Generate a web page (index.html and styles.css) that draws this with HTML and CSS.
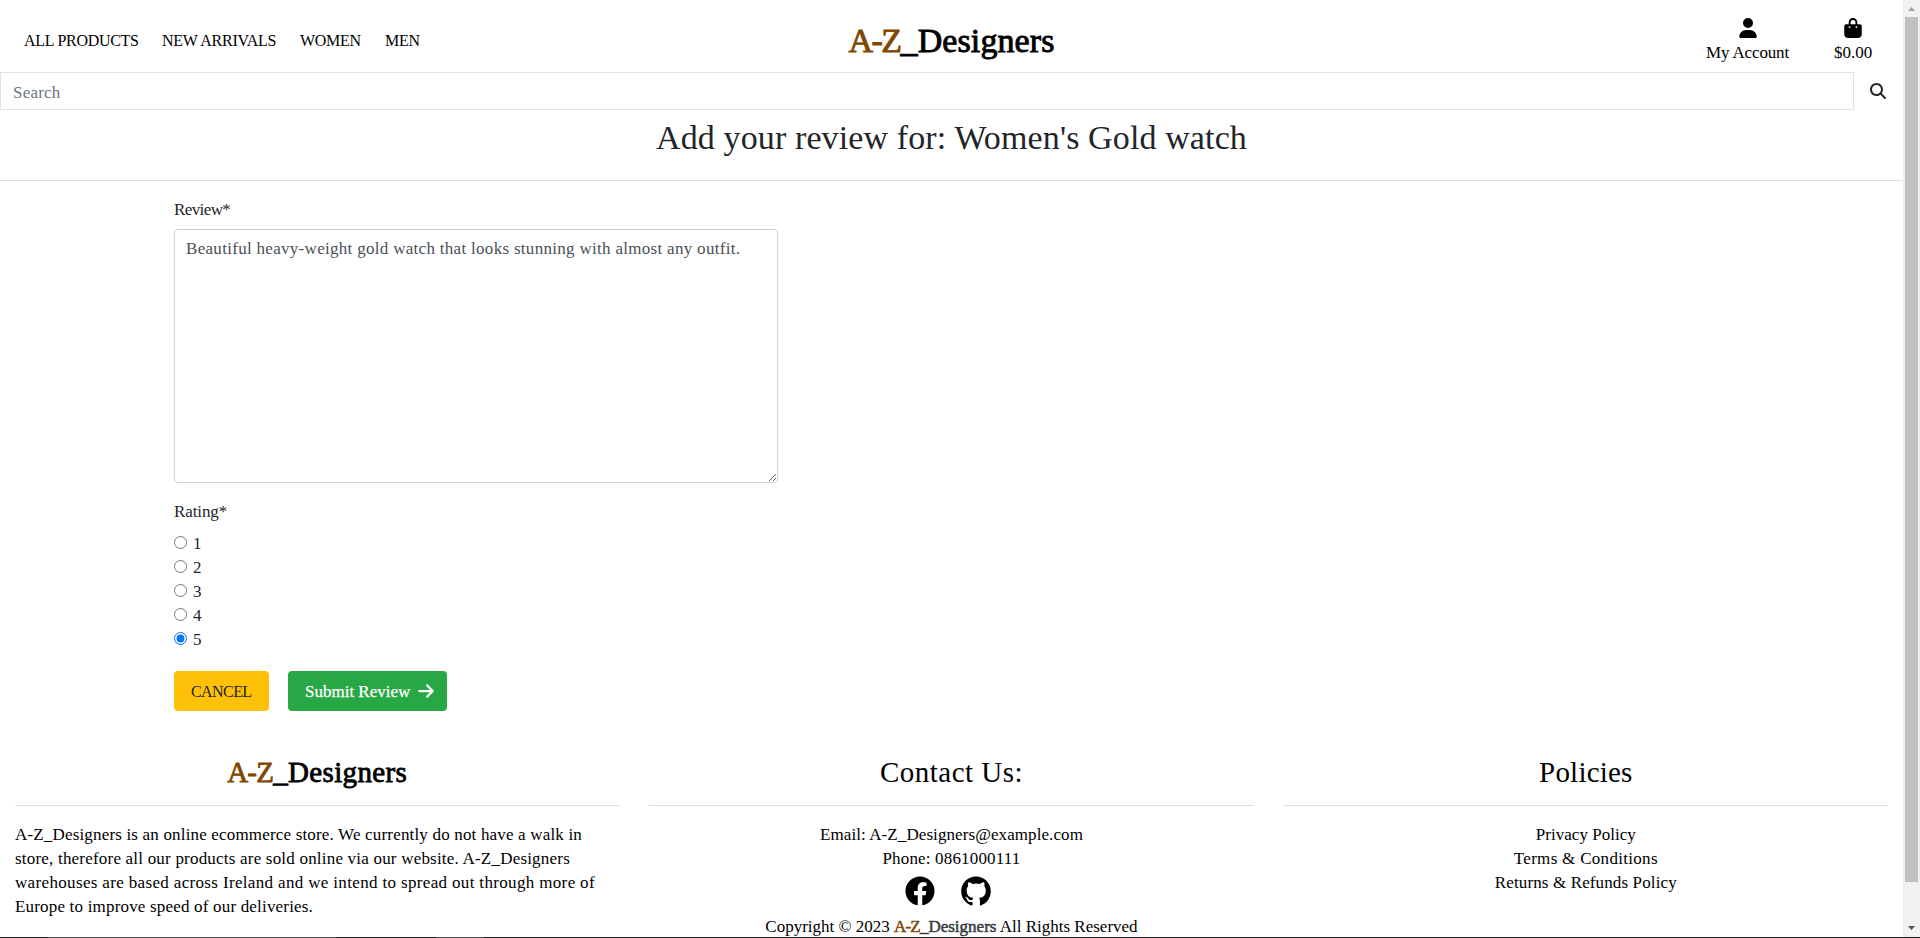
FILE: index.html
```html
<!DOCTYPE html>
<html lang="en">
<head>
<meta charset="utf-8">
<title>A-Z_Designers</title>
<link rel="stylesheet" href="styles.css">
</head>
<body>
<div class="window">
<div class="page">
  <header class="header">
    <nav class="nav">
      <a class="nav-products">ALL PRODUCTS</a>
      <a class="nav-arrivals">NEW ARRIVALS</a>
      <a class="nav-women">WOMEN</a>
      <a class="nav-men">MEN</a>
    </nav>
    <div class="brand"><span class="accent">A-Z</span><span class="rest">_Designers</span></div>
    <div class="tools">
      <a class="tool account">
        <svg width="18" height="20" viewBox="0 0 448 512"><path d="M224 256A128 128 0 1 0 224 0a128 128 0 1 0 0 256zm-45.700 48C79.800 304 0 383.800 0 482.300C0 498.700 13.300 512 29.700 512H418.300c16.400 0 29.700-13.300 29.700-29.700C448 383.800 368.200 304 269.700 304H178.300z"/></svg>
        <span class="account-label">My Account</span>
      </a>
      <a class="tool bag">
        <svg width="18" height="20" viewBox="0 0 448 512"><path d="M160 112c0-35.300 28.700-64 64-64s64 28.700 64 64v48H160V112zm-48 48H48c-26.500 0-48 21.500-48 48V416c0 53 43 96 96 96H352c53 0 96-43 96-96V208c0-26.500-21.500-48-48-48H336V112C336 50.100 285.900 0 224 0S112 50.100 112 112v48zm24 48a24 24 0 1 1 0 48 24 24 0 1 1 0-48zm152 24a24 24 0 1 1 48 0 24 24 0 1 1-48 0z"/></svg>
        <span class="bag-label">$0.00</span>
      </a>
    </div>
  </header>

  <form class="search">
    <input class="search-field" type="text" placeholder="Search">
    <span class="search-button"><svg width="16" height="16" viewBox="0 0 512 512"><path d="M416 208c0 45.900-14.900 88.300-40 122.700L502.600 457.400c12.500 12.500 12.500 32.800 0 45.300s-32.800 12.500-45.300 0L330.700 376c-34.400 25.200-76.800 40-122.700 40C93.100 416 0 322.900 0 208S93.100 0 208 0S416 93.100 416 208zM208 352a144 144 0 1 0 0-288 144 144 0 1 0 0 288z"/></svg></span>
  </form>

  <h2 class="title">Add your review for: Women's Gold watch</h2>

  <main class="review">
    <label class="label review-label">Review*</label>
    <div class="field-edge"></div>
    <textarea class="review-text">Beautiful heavy-weight gold watch that looks stunning with almost any outfit.</textarea>
    <div class="label rating-label">Rating*</div>
    <div class="ratings">
      <label class="rating"><input type="radio" name="rating">1</label>
      <label class="rating"><input type="radio" name="rating">2</label>
      <label class="rating"><input type="radio" name="rating">3</label>
      <label class="rating"><input type="radio" name="rating">4</label>
      <label class="rating"><input type="radio" name="rating" checked>5</label>
    </div>
    <div class="actions">
      <a class="button cancel">CANCEL</a>
      <a class="button submit">Submit Review<svg width="16" height="18" viewBox="0 0 448 512"><path d="M438.600 278.600c12.500-12.500 12.500-32.800 0-45.300l-160-160c-12.500-12.500-32.800-12.500-45.300 0s-12.500 32.800 0 45.300L338.800 224 32 224c-17.700 0-32 14.300-32 32s14.300 32 32 32l306.700 0L233.400 393.400c-12.500 12.500-12.500 32.800 0 45.300s32.800 12.500 45.300 0l160-160z"/></svg></a>
    </div>
  </main>

  <footer class="footer">
    <section class="column">
      <h3 class="heading brand-small"><span class="accent">A-Z</span><span class="rest">_Designers</span></h3>
      <p class="about"><span class="about-1">A-Z_Designers is an online ecommerce store. We currently do not have a walk in</span><br><span class="about-2">store, therefore all our products are sold online via our website. A-Z_Designers</span><br><span class="about-3">warehouses are based across Ireland and we intend to spread out through more of</span><br><span class="about-4">Europe to improve speed of our deliveries.</span></p>
    </section>
    <section class="column centered">
      <h3 class="heading contact-heading">Contact Us:</h3>
      <div class="line email">Email: A-Z_Designers@example.com</div>
      <div class="line phone">Phone: 0861000111</div>
      <div class="social">
        <svg width="30" height="30" viewBox="0 0 512 512"><path d="M504 256C504 119 393 8 256 8S8 119 8 256c0 123.780 90.690 226.380 209.250 245V327.690h-63V256h63v-54.640c0-62.150 37-96.480 93.670-96.480 27.140 0 55.520 4.840 55.520 4.840v61h-31.280c-30.800 0-40.410 19.120-40.410 38.730V256h68.780l-11 71.690h-57.780V501C413.310 482.380 504 379.780 504 256z"/></svg>
        <svg width="30" height="30" viewBox="0 0 16 16"><path d="M8 .2C3.580.2.100 3.700.1 8.100c0 3.540 2.290 6.530 5.470 7.590.4.070.55-.17.55-.38 0-.19-.01-.82-.01-1.490-2.010.37-2.530-.49-2.690-.94-.09-.23-.48-.94-.82-1.130-.28-.15-.68-.52-.01-.53.63-.01 1.080.58 1.230.82.72 1.210 1.870.87 2.330.66.070-.52.28-.87.51-1.070-1.780-.2-3.640-.89-3.640-3.950 0-.87.31-1.590.82-2.150-.08-.2-.36-1.020.08-2.120 0 0 .67-.21 2.200.82.64-.18 1.320-.27 2-.27s1.360.09 2 .27c1.530-1.040 2.200-.82 2.200-.82.44 1.100.16 1.920.08 2.120.51.56.82 1.270.82 2.150 0 3.070-1.870 3.750-3.650 3.950.29.25.54.73.54 1.480 0 1.070-.01 1.930-.01 2.200 0 .21.15.46.55.38A7.950 7.950 0 0 0 15.900 8.100C15.900 3.700 12.420.2 8 .2z"/></svg>
      </div>
      <div class="line copyright">Copyright © 2023 <span class="copy-brand"><span class="accent">A-Z</span><span class="rest">_Designers</span></span> All Rights Reserved</div>
    </section>
    <section class="column centered">
      <h3 class="heading policies-heading">Policies</h3>
      <div class="line privacy">Privacy Policy</div>
      <div class="line terms">Terms &amp; Conditions</div>
      <div class="line returns">Returns &amp; Refunds Policy</div>
    </section>
  </footer>
</div>
<div class="scrollbar">
  <svg class="arrow-up" width="17" height="17" viewBox="0 0 17 17"><path d="M5 11h7L8.500 7z"/></svg>
  <div class="thumb"></div>
  <svg class="arrow-down" width="17" height="17" viewBox="0 0 17 17"><path d="M5 6h7L8.500 10z"/></svg>
</div>
</div>
<div class="edge"><i></i><i></i></div>
</body>
</html>
```
FILE: styles.css
```css
* { box-sizing: border-box; }
body {
  margin: 0;
  height: 938px;
  overflow: hidden;
  background: #fff;
  color: #212529;
  font: 17px/24px "Liberation Serif", serif;
}
svg { display: block; flex: none; fill: currentColor; }
a, .line, .about, .title { white-space: nowrap; }

.window { display: grid; grid-template-columns: 1fr 17px; height: 937px; }
.page { height: 937px; overflow: hidden; }

.header {
  display: grid;
  grid-template-columns: 1fr auto 1fr;
  height: 72px;
  padding: 0 24px;
  color: #000;
}
.nav { display: flex; gap: 24px; padding-top: 29px; font-size: 16px; }
.nav-products { width: 114px; letter-spacing: -0.28px; }
.nav-arrivals { width: 114px; letter-spacing: -0.25px; }
.nav-women { width: 61px; letter-spacing: -0.3px; }
.nav-men { width: 35px; letter-spacing: -0.3px; }
.brand {
  padding-top: 22px;
  font-size: 34px;
  line-height: 38px;
  -webkit-text-stroke: 0.9px;
}
.accent { color: #7f4700; }
.brand .accent { letter-spacing: -1.5px; }
.brand .rest { letter-spacing: 0.1px; }
.tools { display: flex; justify-content: flex-end; gap: 45px; padding: 18px 7px 0 0; }
.tool { display: flex; flex-direction: column; align-items: center; gap: 3px; }
.account { width: 83px; letter-spacing: -0.15px; }
.bag { width: 38px; }

.search { display: flex; height: 38px; margin: 0; }
.search-field {
  width: 1854px;
  height: 38px;
  padding: 8px 12px 4px;
  border: 1px solid #dee2e6;
  font: inherit;
  letter-spacing: 0.2px;
  outline: 0;
}
.search-field::placeholder { color: #6c757d; }
.search-button { padding: 11px 0 0 16px; }

.title {
  height: 71px;
  margin: 0;
  padding-top: 9px;
  border-bottom: 1px solid #dcdddd;
  text-align: center;
  font-size: 34px;
  line-height: 38px;
  font-weight: 400;
  letter-spacing: 0.12px;
}

.review { padding: 17px 0 0 174px; height: 563px; }
.label { display: block; height: 27px; }
.review-label { letter-spacing: -0.6px; }
.field-edge { width: 600px; height: 1px; margin: 0 2px 3px; background: #f4f5f9; }
.review-text {
  display: block;
  width: 604px;
  height: 254px;
  padding: 7px 11px 5px;
  border: 1px solid #ced4da;
  border-radius: 4px;
  color: #495057;
  font: inherit;
  letter-spacing: 0.3px;
  resize: both;
}
.rating-label { margin-top: 17px; height: 32px; letter-spacing: -0.1px; }
.rating { display: flex; gap: 6px; height: 24px; }
.rating input { width: 13px; height: 13px; margin: 4px 0 0; }
.actions { display: flex; gap: 19px; margin-top: 19px; }
.button { display: flex; height: 40px; padding: 9px 12px 0 17px; border-radius: 4px; }
.cancel { width: 95px; background: #ffc107; font-size: 16px; letter-spacing: -0.58px; }
.submit { width: 159px; background: #28a745; color: #fff; gap: 8px; }
.submit { -webkit-text-stroke: 0.25px; }
.submit svg { margin-top: 2px; }

.footer { display: grid; grid-template-columns: repeat(3, 1fr); color: #000; }
.column { padding: 11px 15px 0; }
.centered { text-align: center; }
.heading {
  height: 51px;
  margin: 0 0 17px;
  border-bottom: 1px solid #dcdcdc;
  text-align: center;
  font-size: 29px;
  line-height: 34px;
  font-weight: 400;
}
.brand-small { -webkit-text-stroke: 0.8px; }
.brand-small .accent { letter-spacing: -0.8px; }
.brand-small .rest { letter-spacing: 0.35px; }
.contact-heading { letter-spacing: 0.48px; }
.policies-heading { letter-spacing: 0.2px; }
.about { margin: 0; }
.about-1 { letter-spacing: 0.173px; }
.about-2 { letter-spacing: 0.204px; }
.about-3 { letter-spacing: 0.344px; }
.about-4 { letter-spacing: 0.183px; }
.email { letter-spacing: 0.087px; }
.phone { letter-spacing: 0.164px; }
.privacy { letter-spacing: 0.026px; }
.terms { letter-spacing: 0.3px; }
.returns { letter-spacing: 0.126px; }
.social { display: flex; justify-content: center; gap: 26px; height: 44px; padding: 5px 7px 0 0; }
.copy-brand { -webkit-text-stroke: 0.5px; }
.copy-brand .accent { letter-spacing: -0.8px; }
.copy-brand .rest { color: #343a40; }

.scrollbar { display: flex; flex-direction: column; background: #f1f1f1; }
.thumb { height: 865px; margin: 0 2px; background: #c1c1c1; }
.arrow-up { color: #a3a3a3; }
.arrow-down { margin-top: auto; color: #505050; }

.edge { display: flex; height: 1px; padding-left: 48px; gap: 100px; background: #1f1f1f; }
.edge i { width: 288px; background: #555; }
.edge i + i { width: 48px; }
```
